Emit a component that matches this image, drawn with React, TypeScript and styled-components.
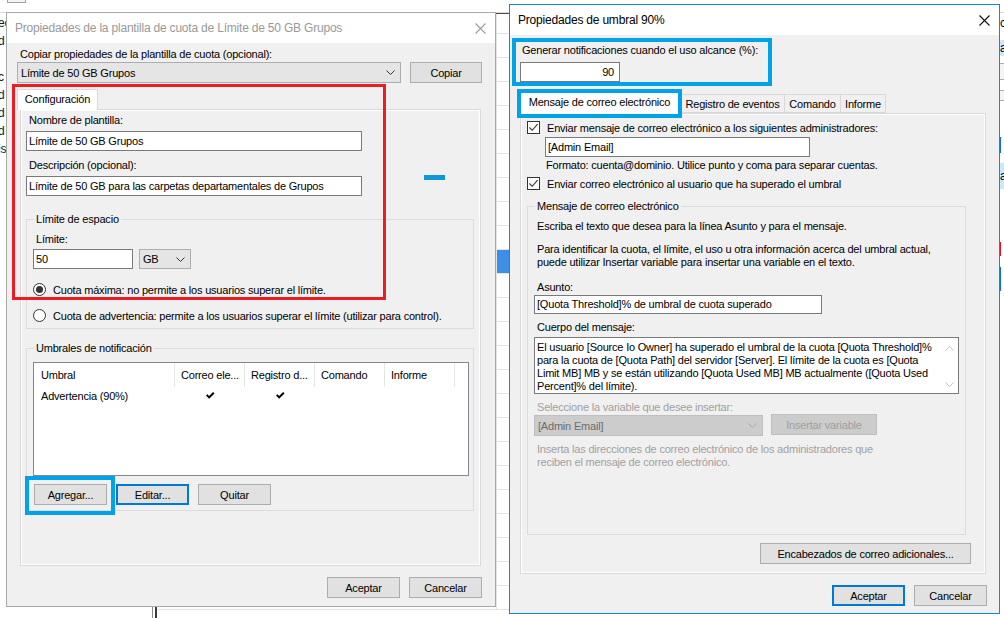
import React from "react"
import styled, { createGlobalStyle } from "styled-components"

const GlobalStyle = createGlobalStyle`
    html, body {
        margin: 0;
        padding: 0;
        background: #fff;
    }
    body {
        font-family: "Liberation Sans", Arial, sans-serif;
        font-size: 11px;
        letter-spacing: -0.2px;
        color: #000;
    }
    * {
        box-sizing: border-box;
    }
`

const Desktop = styled.div`
    position: relative;
    width: 1004px;
    height: 618px;
    overflow: hidden;
    background: #fff;
`

/* ---------- window behind the dialogs ---------- */

const BackWindow = styled.div`
    position: absolute;
    inset: 0;
    display: flex;
    flex-direction: column;
    background: #fff;
`

const BackToolbar = styled.div`
    height: 13px;
    flex: none;
    padding-left: 7px;
    border-bottom: 1px solid #d9d9d9;
    overflow: hidden;
`

const ToolIcon = styled.div`
    width: 19px;
    height: 14px;
    margin-top: -11px;
    border: 1px solid #a0a0a0;
    background: #f4f4f4;
`

const BackMain = styled.div`
    flex: 1;
    display: flex;
    min-height: 0;
`

const NavList = styled.div`
    width: 152px;
    flex: none;
    padding-top: 1px;
`

const NavItem = styled.div`
    height: 18px;
    line-height: 18px;
    margin-left: -2px;
    white-space: nowrap;
    font-size: 12px;
    color: #1a1a1a;
`

const Splitter = styled.div`
    width: 5px;
    flex: none;
    border-left: 1px solid #8a8a8a;
    border-right: 2px solid #3a3a3a;
`

const GridPane = styled.div`
    width: 842px;
    flex: none;
    display: flex;
    flex-direction: column;
    border-top: 1px solid #4a4a4a;
`

const GridRow = styled.div<{ $h: number; $selected?: boolean }>`
    height: ${p => p.$h}px;
    flex: none;
    display: flex;
    border-bottom: 1px solid #e3e3e3;
    background: ${p => (p.$selected ? "#3d8ee6" : "transparent")};
`

const GridCell = styled.div<{ $w: number }>`
    width: ${p => p.$w}px;
    flex: none;
    border-right: 1px solid #e3e3e3;
`

const SidePanel = styled.div`
    flex: 1;
    display: flex;
    flex-direction: column;
    overflow: hidden;
`

const SideText = styled.div<{ $mt: number; $h: number; $sel?: boolean }>`
    height: ${p => p.$h}px;
    margin-top: ${p => p.$mt}px;
    line-height: ${p => p.$h}px;
    font-size: 12px;
    padding-left: 1px;
    background: ${p => (p.$sel ? "#cce8ff" : "transparent")};
`

const SideBox = styled.div<{ $mt: number; $h: number }>`
    height: ${p => p.$h}px;
    margin-top: ${p => p.$mt}px;
    border: 1px solid #adadad;
    border-right: none;
    background: #f4f4f4;
`

const SideBar = styled.div<{ $mt: number; $h: number; $color: string }>`
    width: 2px;
    height: ${p => p.$h}px;
    margin-top: ${p => p.$mt}px;
    background: ${p => p.$color};
`

/* ---------- dialog frame ---------- */

const Window = styled.div<{ $left: number; $top: number; $width: number; $height: number; $active?: boolean }>`
    position: absolute;
    left: ${p => p.$left}px;
    top: ${p => p.$top}px;
    width: ${p => p.$width}px;
    height: ${p => p.$height}px;
    border: 1px solid ${p => (p.$active ? "#1883d7" : "#a9a9a9")};
    background: #f0f0f0;
    display: flex;
    flex-direction: column;
`

const TitleBar = styled.div<{ $active?: boolean }>`
    height: 30px;
    flex: none;
    display: flex;
    align-items: center;
    padding-left: 8px;
    background: #fff;
    font-size: 12px;
    color: ${p => (p.$active ? "#000" : "#999")};
`

const TitleText = styled.div`
    flex: 1;
    white-space: nowrap;
`

const CloseBox = styled.div`
    width: 30px;
    height: 30px;
    display: flex;
    align-items: center;
    justify-content: center;
`

const TemplateBody = styled.div`
    flex: 1;
    display: flex;
    flex-direction: column;
    padding: 5px 13px 0 10px;
`

const ThresholdBody = styled.div`
    flex: 1;
    display: flex;
    flex-direction: column;
    padding: 9px 12px 0 10px;
`

/* ---------- controls ---------- */

const FieldLabel = styled.div<{ $mt?: number; $ml?: number; $disabled?: boolean }>`
    line-height: 13px;
    white-space: nowrap;
    margin-top: ${p => p.$mt ?? 0}px;
    margin-left: ${p => p.$ml ?? 0}px;
    color: ${p => (p.$disabled ? "#a0a0a0" : "#000")};
`

const Row = styled.div<{ $mt?: number; $gap?: number; $ml?: number }>`
    display: flex;
    align-items: flex-start;
    margin-top: ${p => p.$mt ?? 0}px;
    margin-left: ${p => p.$ml ?? 0}px;
    gap: ${p => p.$gap ?? 0}px;
`

const TextBox = styled.div<{ $w: number; $h?: number; $mt?: number; $ml?: number; $right?: boolean }>`
    width: ${p => p.$w}px;
    height: ${p => p.$h ?? 20}px;
    flex: none;
    margin-top: ${p => p.$mt ?? 0}px;
    margin-left: ${p => p.$ml ?? 0}px;
    border: 1px solid #7a7a7a;
    background: #fff;
    padding: 0 ${p => (p.$right ? 5 : 2)}px 0 2px;
    line-height: ${p => (p.$h ?? 20) - 2}px;
    white-space: nowrap;
    overflow: hidden;
    text-align: ${p => (p.$right ? "right" : "left")};
`

const Combo = styled.div<{ $w: number; $h?: number; $disabled?: boolean }>`
    width: ${p => p.$w}px;
    height: ${p => p.$h ?? 21}px;
    flex: none;
    display: flex;
    align-items: center;
    justify-content: space-between;
    padding: 0 5px 0 3px;
    border: 1px solid ${p => (p.$disabled ? "#bfbfbf" : "#adadad")};
    background: ${p => (p.$disabled ? "#cccccc" : "#e5e5e5")};
    color: ${p => (p.$disabled ? "#6d6d6d" : "#000")};
    white-space: nowrap;
`

const Button = styled.div<{ $w: number; $focus?: boolean; $disabled?: boolean; $mt?: number }>`
    width: ${p => p.$w}px;
    height: 21px;
    flex: none;
    display: flex;
    align-items: center;
    justify-content: center;
    margin-top: ${p => p.$mt ?? 0}px;
    border: ${p => (p.$focus ? "2px solid #0078d7" : `1px solid ${p.$disabled ? "#bfbfbf" : "#adadad"}`)};
    background: ${p => (p.$disabled ? "#cccccc" : "#e1e1e1")};
    color: ${p => (p.$disabled ? "#a0a0a0" : "#000")};
    white-space: nowrap;
`

const ButtonBar = styled.div<{ $mt: number }>`
    display: flex;
    justify-content: flex-end;
    gap: 9px;
    margin-top: ${p => p.$mt}px;
`

const TabStrip = styled.div<{ $mt: number; $ml?: number }>`
    display: flex;
    align-items: flex-end;
    margin-top: ${p => p.$mt}px;
    margin-left: ${p => p.$ml ?? 0}px;
`

const Tab = styled.div<{ $w: number; $h?: number; $selected?: boolean }>`
    width: ${p => p.$w}px;
    height: ${p => p.$h ?? 19}px;
    flex: none;
    display: flex;
    align-items: center;
    justify-content: center;
    padding-bottom: ${p => (p.$selected ? 2 : 0)}px;
    margin-bottom: ${p => (p.$selected ? -1 : 0)}px;
    margin-left: ${p => (p.$selected ? 0 : -1)}px;
    position: relative;
    z-index: ${p => (p.$selected ? 2 : 1)};
    border: 1px solid #d9d9d9;
    border-bottom: ${p => (p.$selected ? "none" : "1px solid #d9d9d9")};
    background: ${p => (p.$selected ? "#fff" : "#f0f0f0")};
    white-space: nowrap;
`

const TabPane = styled.div<{ $w: number; $h: number; $ml: number; $pad: string }>`
    width: ${p => p.$w}px;
    height: ${p => p.$h}px;
    flex: none;
    margin-left: ${p => p.$ml}px;
    border: 1px solid #d9d9d9;
    background: #f0f0f0;
    box-shadow: inset 0 0 0 1px #fff;
    padding: ${p => p.$pad};
    display: flex;
    flex-direction: column;
`

const GroupBox = styled.fieldset<{ $w: number; $mt: number }>`
    width: ${p => p.$w}px;
    margin: ${p => p.$mt}px 0 0 0;
    padding: 0;
    min-width: 0;
    border: 1px solid #dcdcdc;
`

const GroupLegend = styled.legend`
    margin-left: 7px;
    padding: 0 2px;
    line-height: 13px;
    white-space: nowrap;
`

const GroupContent = styled.div<{ $pad: string }>`
    display: flex;
    flex-direction: column;
    padding: ${p => p.$pad};
`

const OptionRow = styled.div<{ $mt?: number }>`
    display: flex;
    align-items: center;
    height: 13px;
    margin-top: ${p => p.$mt ?? 0}px;
    gap: 7px;
    white-space: nowrap;
`

const RadioMark = styled.div<{ $checked?: boolean }>`
    width: 13px;
    height: 13px;
    flex: none;
    border-radius: 50%;
    border: 1px solid #333;
    background: #fff;
    display: flex;
    align-items: center;
    justify-content: center;

    &::after {
        content: '';
        display: ${p => (p.$checked ? "block" : "none")};
        width: 7px;
        height: 7px;
        border-radius: 50%;
        background: #333;
    }
`

const CheckMark = styled.div`
    width: 13px;
    height: 13px;
    flex: none;
    border: 1px solid #333;
    background: #fff;
    display: flex;
    align-items: center;
    justify-content: center;
`

const ListView = styled.div`
    width: 436px;
    height: 114px;
    margin-top: 7px;
    border: 1px solid #828790;
    background: #fff;
`

const ListHeader = styled.div`
    display: flex;
    height: 24px;
`

const HeaderCell = styled.div<{ $w: number; $pl?: number }>`
    width: ${p => p.$w}px;
    flex: none;
    padding-left: ${p => p.$pl ?? 6}px;
    line-height: 24px;
    border-right: 1px solid #e5e5e5;
    white-space: nowrap;
    overflow: hidden;
`

const ListRow = styled.div`
    display: flex;
    height: 17px;
`

const ListCell = styled.div<{ $w: number; $center?: boolean; $pl?: number }>`
    width: ${p => p.$w}px;
    flex: none;
    display: flex;
    align-items: center;
    justify-content: ${p => (p.$center ? "center" : "flex-start")};
    padding-left: ${p => p.$pl ?? 0}px;
    white-space: nowrap;
`

const BlueDash = styled.div`
    width: 21px;
    height: 5px;
    margin-left: 62px;
    margin-top: -1px;
    background: #1396d6;
`

const MessageArea = styled.div`
    width: 425px;
    height: 57px;
    margin-top: 3px;
    border: 1px solid #7a7a7a;
    background: #fff;
    display: flex;
`

const MessageText = styled.div`
    flex: 1;
    padding: 3px 0 0 2px;
`

const MessageLine = styled.div`
    line-height: 13px;
    white-space: nowrap;
`

const ScrollColumn = styled.div`
    width: 17px;
    flex: none;
    display: flex;
    flex-direction: column;
    justify-content: space-between;
    align-items: center;
    padding: 8px 0 6px;
`

const RightButton = styled(Button)`
    align-self: flex-end;
    margin-right: 14px;
    margin-top: 8px;
`

/* ---------- annotations drawn over the screenshot ---------- */

const Marker = styled.div<{ $left: number; $top: number; $width: number; $height: number; $color: string; $thick: number }>`
    position: absolute;
    left: ${p => p.$left}px;
    top: ${p => p.$top}px;
    width: ${p => p.$width}px;
    height: ${p => p.$height}px;
    border: ${p => p.$thick}px solid ${p => p.$color};
    pointer-events: none;
    z-index: 10;
`

/* ---------- drawings ---------- */

const CloseIcon = ({ color }: { color: string }) => (
    <svg width="11" height="11" viewBox="0 0 11 11">
        <path d="M0.5 0.5 L10.5 10.5 M10.5 0.5 L0.5 10.5" stroke={color} strokeWidth="1.1" fill="none" />
    </svg>
)

const Chevron = ({ color = "#333", up = false }: { color?: string; up?: boolean }) => (
    <svg width="9" height="5" viewBox="0 0 9 5">
        <path d={up ? "M0.5 4.5 L4.5 0.5 L8.5 4.5" : "M0.5 0.5 L4.5 4.5 L8.5 0.5"} stroke={color} strokeWidth="1" fill="none" />
    </svg>
)

const BoxTick = () => (
    <svg width="11" height="11" viewBox="0 0 11 11">
        <path d="M1.5 5.5 L4.2 8.3 L9.6 2.2" stroke="#333" strokeWidth="1.1" fill="none" />
    </svg>
)

const ListTick = () => (
    <svg width="9" height="7" viewBox="0 0 9 7">
        <path d="M0 3.6 L1.4 2.2 L3.1 3.9 L7.1 0 L8.5 1.4 L3.1 6.8 Z" fill="#000" />
    </svg>
)

const CheckOption = ({ children, mt }: { children: React.ReactNode; mt?: number }) => (
    <OptionRow $mt={mt}>
        <CheckMark><BoxTick /></CheckMark>
        <span>{children}</span>
    </OptionRow>
)

const RadioOption = ({ children, checked, mt }: { children: React.ReactNode; checked?: boolean; mt?: number }) => (
    <OptionRow $mt={mt}>
        <RadioMark $checked={checked} />
        <span>{children}</span>
    </OptionRow>
)

const navItems = ["ec", "d", "", "c", "d", "d", "d", "is"]

const Background = () => (
    <BackWindow>
        <BackToolbar><ToolIcon /></BackToolbar>
        <BackMain>
            <NavList>
                {navItems.map((t, i) => <NavItem key={i}>{t}</NavItem>)}
            </NavList>
            <Splitter />
            <GridPane>
                <GridRow $h={20}><GridCell $w={340} /></GridRow>
                {Array.from({ length: 24 }).map((_, i) => (
                    <GridRow key={i} $h={24} $selected={i === 9}><GridCell $w={340} /></GridRow>
                ))}
            </GridPane>
            <SidePanel>
                <SideText $mt={4} $h={12}>c</SideText>
                <SideText $mt={11} $h={16} $sel>a</SideText>
                <SideBox $mt={7} $h={17} />
                <SideBox $mt={10} $h={11} />
                <SideBar $mt={36} $h={16} $color="#0078d7" />
                <SideText $mt={10} $h={26} $sel>a</SideText>
                <SideBar $mt={53} $h={14} $color="#e81123" />
                <SideBar $mt={11} $h={24} $color="#0078d7" />
            </SidePanel>
        </BackMain>
    </BackWindow>
)

const TemplateDialog = () => (
    <Window $left={6} $top={12} $width={490} $height={595}>
        <TitleBar>
            <TitleText>Propiedades de la plantilla de cuota de Límite de 50 GB Grupos</TitleText>
            <CloseBox><CloseIcon color="#9a9a9a" /></CloseBox>
        </TitleBar>
        <TemplateBody>
            <FieldLabel $ml={3}>Copiar propiedades de la plantilla de cuota (opcional):</FieldLabel>
            <Row $mt={1} $gap={9}>
                <Combo $w={384}>
                    <span>Límite de 50 GB Grupos</span>
                    <Chevron />
                </Combo>
                <Button $w={72}>Copiar</Button>
            </Row>

            <TabStrip $mt={6}>
                <Tab $w={81} $h={21} $selected>Configuración</Tab>
            </TabStrip>
            <TabPane $w={461} $h={457} $ml={3} $pad="4px 6px 0 5px">
                <FieldLabel $ml={3}>Nombre de plantilla:</FieldLabel>
                <TextBox $w={336} $mt={4}>Límite de 50 GB Grupos</TextBox>
                <FieldLabel $ml={3} $mt={8}>Descripción (opcional):</FieldLabel>
                <Row $mt={4}>
                    <TextBox $w={336}>Límite de 50 GB para las carpetas departamentales de Grupos</TextBox>
                    <BlueDash />
                </Row>

                <GroupBox $w={448} $mt={17}>
                    <GroupLegend>Límite de espacio</GroupLegend>
                    <GroupContent $pad="7px 4px 6px 6px">
                        <FieldLabel $ml={3}>Límite:</FieldLabel>
                        <Row $mt={3} $gap={6}>
                            <TextBox $w={100}>50</TextBox>
                            <Combo $w={52} $h={20}>
                                <span>GB</span>
                                <Chevron />
                            </Combo>
                        </Row>
                        <RadioOption mt={14} checked>Cuota máxima: no permite a los usuarios superar el límite.</RadioOption>
                        <RadioOption mt={13}>Cuota de advertencia: permite a los usuarios superar el límite (utilizar para control).</RadioOption>
                    </GroupContent>
                </GroupBox>

                <GroupBox $w={448} $mt={13}>
                    <GroupLegend>Umbrales de notificación</GroupLegend>
                    <GroupContent $pad="0 4px 5px 6px">
                        <ListView>
                            <ListHeader>
                                <HeaderCell $w={141} $pl={7}>Umbral</HeaderCell>
                                <HeaderCell $w={70}>Correo ele...</HeaderCell>
                                <HeaderCell $w={70}>Registro d...</HeaderCell>
                                <HeaderCell $w={70}>Comando</HeaderCell>
                                <HeaderCell $w={70}>Informe</HeaderCell>
                            </ListHeader>
                            <ListRow>
                                <ListCell $w={141} $pl={7}>Advertencia (90%)</ListCell>
                                <ListCell $w={70} $center><ListTick /></ListCell>
                                <ListCell $w={70} $center><ListTick /></ListCell>
                            </ListRow>
                        </ListView>
                        <Row $mt={8} $ml={1} $gap={9}>
                            <Button $w={73}>Agregar...</Button>
                            <Button $w={73} $focus>Editar...</Button>
                            <Button $w={73}>Quitar</Button>
                        </Row>
                    </GroupContent>
                </GroupBox>
            </TabPane>

            <ButtonBar $mt={11}>
                <Button $w={73}>Aceptar</Button>
                <Button $w={73}>Cancelar</Button>
            </ButtonBar>
        </TemplateBody>
    </Window>
)

const ThresholdDialog = () => (
    <Window $left={509} $top={4} $width={491} $height={610} $active>
        <TitleBar $active>
            <TitleText>Propiedades de umbral 90%</TitleText>
            <CloseBox><CloseIcon color="#111" /></CloseBox>
        </TitleBar>
        <ThresholdBody>
            <FieldLabel $ml={2}>Generar notificaciones cuando el uso alcance (%):</FieldLabel>
            <TextBox $w={100} $mt={5} $right>90</TextBox>

            <TabStrip $mt={9} $ml={-2}>
                <Tab $w={163} $h={23} $selected>Mensaje de correo electrónico</Tab>
                <Tab $w={105}>Registro de eventos</Tab>
                <Tab $w={57}>Comando</Tab>
                <Tab $w={46}>Informe</Tab>
            </TabStrip>
            <TabPane $w={466} $h={461} $ml={0} $pad="7px 0 0 6px">
                <CheckOption>Enviar mensaje de correo electrónico a los siguientes administradores:</CheckOption>
                <TextBox $w={265} $mt={3} $ml={18}>[Admin Email]</TextBox>
                <FieldLabel $ml={19} $mt={2}>Formato: cuenta@dominio. Utilice punto y coma para separar cuentas.</FieldLabel>
                <CheckOption mt={5}>Enviar correo electrónico al usuario que ha superado el umbral</CheckOption>

                <GroupBox $w={439} $mt={10}>
                    <GroupLegend>Mensaje de correo electrónico</GroupLegend>
                    <GroupContent $pad="7px 0 65px 6px">
                        <FieldLabel $ml={3}>Escriba el texto que desea para la línea Asunto y para el mensaje.</FieldLabel>
                        <FieldLabel $ml={3} $mt={10}>
                            Para identificar la cuota, el límite, el uso u otra información acerca del umbral actual,<br />
                            puede utilizar Insertar variable para insertar una variable en el texto.
                        </FieldLabel>
                        <FieldLabel $ml={3} $mt={12}>Asunto:</FieldLabel>
                        <TextBox $w={288} $h={19} $mt={1}>[Quota Threshold]% de umbral de cuota superado</TextBox>
                        <FieldLabel $ml={3} $mt={7}>Cuerpo del mensaje:</FieldLabel>
                        <MessageArea>
                            <MessageText>
                                <MessageLine>El usuario [Source Io Owner] ha superado el umbral de la cuota [Quota Threshold]%</MessageLine>
                                <MessageLine>para la cuota de [Quota Path] del servidor [Server]. El límite de la cuota es [Quota</MessageLine>
                                <MessageLine>Limit MB] MB y se están utilizando [Quota Used MB] MB actualmente ([Quota Used</MessageLine>
                                <MessageLine>Percent]% del límite).</MessageLine>
                            </MessageText>
                            <ScrollColumn>
                                <Chevron up color="#c2c2c2" />
                                <Chevron color="#c2c2c2" />
                            </ScrollColumn>
                        </MessageArea>
                        <FieldLabel $ml={3} $mt={7} $disabled>Seleccione la variable que desee insertar:</FieldLabel>
                        <Row $mt={1} $gap={8}>
                            <Combo $w={229} $disabled>
                                <span>[Admin Email]</span>
                                <Chevron color="#a8a8a8" />
                            </Combo>
                            <Button $w={106} $disabled $mt={-1}>Insertar variable</Button>
                        </Row>
                        <FieldLabel $ml={3} $mt={7} $disabled>
                            Inserta las direcciones de correo electrónico de los administradores que<br />
                            reciben el mensaje de correo electrónico.
                        </FieldLabel>
                    </GroupContent>
                </GroupBox>

                <RightButton $w={211}>Encabezados de correo adicionales...</RightButton>
            </TabPane>

            <ButtonBar $mt={11}>
                <Button $w={73} $focus>Aceptar</Button>
                <Button $w={73}>Cancelar</Button>
            </ButtonBar>
        </ThresholdBody>
    </Window>
)

export default function App() {
    return (
        <>
            <GlobalStyle />
            <Desktop>
                <Background />
                <TemplateDialog />
                <ThresholdDialog />
                <Marker $left={12} $top={84} $width={374} $height={216} $color="#ed1c24" $thick={3} />
                <Marker $left={25} $top={476} $width={90} $height={39} $color="#00a2e8" $thick={4} />
                <Marker $left={512} $top={38} $width={260} $height={48} $color="#00a2e8" $thick={4} />
                <Marker $left={517} $top={89} $width={165} $height={29} $color="#00a2e8" $thick={4} />
            </Desktop>
        </>
    )
}
